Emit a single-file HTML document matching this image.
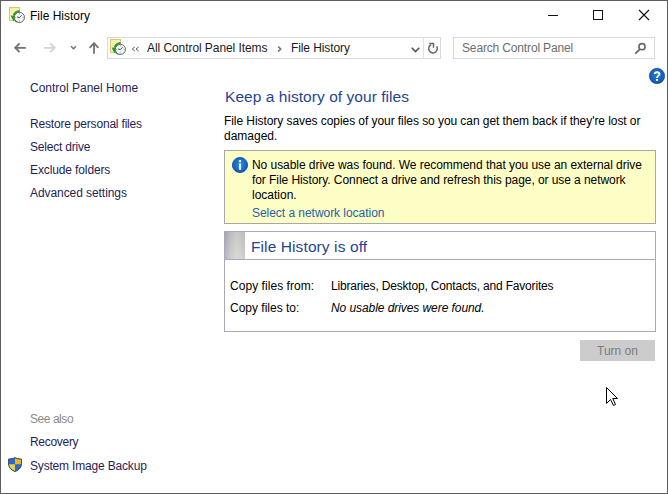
<!DOCTYPE html>
<html><head><meta charset="utf-8">
<style>
*{margin:0;padding:0;box-sizing:border-box}
html,body{width:668px;height:494px;overflow:hidden;background:#fff}
body{position:relative;font-family:"Liberation Sans",sans-serif;font-size:12px;color:#000}
.a{position:absolute;white-space:nowrap;line-height:15px}
#frame{position:absolute;left:0;top:0;width:668px;height:494px;border:1px solid #5e5e5e;pointer-events:none}
.nav{color:#1f2456}
.box{position:absolute;border:1px solid #a4a4a4}
svg{position:absolute;overflow:visible}
</style></head><body>

<!-- title bar -->
<svg style="left:9px;top:7px" width="17" height="17" viewBox="0 0 17 17">
  <defs><linearGradient id="yg1" x1="0" y1="0" x2="1" y2="1"><stop offset="0" stop-color="#fbeaa6"/><stop offset="0.5" stop-color="#fff3b0"/><stop offset="1" stop-color="#f3d77c"/></linearGradient></defs>
  <rect x="0.5" y="0.5" width="10" height="13" fill="url(#yg1)" stroke="#e2c27a"/>
  <path d="M10.6 4.6 A5.9 5.9 0 0 0 5.2 8.8" fill="none" stroke="#22a634" stroke-width="3.2"/>
  <path d="M1.6 8.4 L8.4 9 L4.4 14.2 Z" fill="#1e9e2e"/>
  <path d="M5.4 11.5 C5.6 13.5 6.8 14.6 8.4 15" fill="none" stroke="#2fb040" stroke-width="1.6"/>
  <circle cx="10.4" cy="10.4" r="5.1" fill="#f4f5f6" stroke="#5a5a5a" stroke-width="0.9"/>
  <path d="M8.2 9.9 L10.3 10.7 L12.6 8.3" fill="none" stroke="#333" stroke-width="0.9"/>
  <path d="M10.4 6.2 V7.2 M14.6 10.4 H13.6 M10.4 14.6 V13.6 M6.2 10.4 H7.2" stroke="#777" stroke-width="0.8"/>
</svg>
<div class="a" style="left:30px;top:9px;color:#000">File History</div>

<!-- window controls -->
<div style="position:absolute;left:548px;top:15px;width:10px;height:1px;background:#111"></div>
<div style="position:absolute;left:593px;top:10px;width:10px;height:10px;border:1px solid #111"></div>
<svg style="left:639px;top:10px" width="10" height="10" viewBox="0 0 10 10">
  <path d="M0 0 L10 10 M10 0 L0 10" stroke="#111" stroke-width="1.1"/>
</svg>

<!-- nav arrows -->
<svg style="left:13px;top:41px" width="14" height="14" viewBox="0 0 14 14">
  <path d="M2.2 6.8 H12.8 M6.6 2.4 L2.2 6.8 L6.6 11.2" fill="none" stroke="#737373" stroke-width="1.85"/>
</svg>
<svg style="left:42.7px;top:41px" width="14" height="14" viewBox="0 0 14 14">
  <path d="M0.8 6.8 H11.6 M7.2 2.4 L11.6 6.8 L7.2 11.2" fill="none" stroke="#d4d4d4" stroke-width="1.85"/>
</svg>
<svg style="left:70px;top:45px" width="7" height="5" viewBox="0 0 7 5">
  <path d="M1 1.2 L3.5 3.7 L6 1.2" fill="none" stroke="#707070" stroke-width="1.4"/>
</svg>
<svg style="left:88px;top:41px" width="12" height="14" viewBox="0 0 12 14">
  <path d="M6 2.2 V12.8 M1.6 6.8 L6 2.2 L10.4 6.8" fill="none" stroke="#737373" stroke-width="1.85"/>
</svg>

<!-- address bar -->
<div class="box" style="left:107px;top:37px;width:334px;height:22px;border-color:#d9d9d9"></div>
<div style="position:absolute;left:423px;top:38px;width:1px;height:20px;background:#e3e3e3"></div>
<svg style="left:110px;top:39px" width="17" height="17" viewBox="0 0 17 17">
  <defs><linearGradient id="yg2" x1="0" y1="0" x2="1" y2="1"><stop offset="0" stop-color="#fbeaa6"/><stop offset="0.5" stop-color="#fff3b0"/><stop offset="1" stop-color="#f3d77c"/></linearGradient></defs>
  <rect x="0.5" y="0.5" width="10" height="13" fill="url(#yg2)" stroke="#e2c27a"/>
  <path d="M10.6 4.6 A5.9 5.9 0 0 0 5.2 8.8" fill="none" stroke="#22a634" stroke-width="3.2"/>
  <path d="M1.6 8.4 L8.4 9 L4.4 14.2 Z" fill="#1e9e2e"/>
  <path d="M5.4 11.5 C5.6 13.5 6.8 14.6 8.4 15" fill="none" stroke="#2fb040" stroke-width="1.6"/>
  <circle cx="10.4" cy="10.4" r="5.1" fill="#f4f5f6" stroke="#5a5a5a" stroke-width="0.9"/>
  <path d="M8.2 9.9 L10.3 10.7 L12.6 8.3" fill="none" stroke="#333" stroke-width="0.9"/>
  <path d="M10.4 6.2 V7.2 M14.6 10.4 H13.6 M10.4 14.6 V13.6 M6.2 10.4 H7.2" stroke="#777" stroke-width="0.8"/>
</svg>
<svg style="left:131px;top:45.6px" width="9" height="6" viewBox="0 0 9 6">
  <path d="M3.8 1 L1.2 3 L3.8 5 M7.6 1 L5 3 L7.6 5" fill="none" stroke="#606060" stroke-width="1"/>
</svg>
<div class="a" style="left:147px;top:41px;color:#1a1a1a;letter-spacing:-0.07px">All Control Panel Items</div>
<svg style="left:277px;top:45.5px" width="5" height="7" viewBox="0 0 5 7">
  <path d="M1.1 0.6 L3.8 3.1 L1.1 5.6" fill="none" stroke="#787878" stroke-width="1.5"/>
</svg>
<div class="a" style="left:291px;top:41px;color:#1a1a1a;letter-spacing:-0.1px">File History</div>
<svg style="left:411px;top:46.5px" width="9" height="6" viewBox="0 0 9 6">
  <path d="M0.7 0.7 L4.5 4.6 L8.3 0.7" fill="none" stroke="#555" stroke-width="1.6"/>
</svg>
<svg style="left:427px;top:42px" width="12" height="13" viewBox="0 0 12 13">
  <path d="M9.6 4.26 A4.3 4.3 0 1 1 4.05 2.77" fill="none" stroke="#666" stroke-width="1.5"/>
  <path d="M2.2 1.6 H6.5 V5.8" fill="none" stroke="#666" stroke-width="1.5"/>
</svg>

<!-- search -->
<div class="box" style="left:453px;top:37px;width:202px;height:22px;border-color:#d9d9d9"></div>
<div class="a" style="left:462px;top:41px;color:#6d6d6d;letter-spacing:-0.15px">Search Control Panel</div>
<svg style="left:634px;top:42px" width="12" height="12" viewBox="0 0 12 12">
  <circle cx="8" cy="4.7" r="3.05" fill="none" stroke="#666" stroke-width="1.6"/>
  <path d="M5.9 7.1 L1.3 11.6" stroke="#666" stroke-width="1.8"/>
</svg>

<!-- help icon -->
<svg style="left:649px;top:68px" width="16" height="16" viewBox="0 0 16 16">
  <defs><radialGradient id="hg" cx="0.5" cy="0.45" r="0.55"><stop offset="0" stop-color="#2a7ad6"/><stop offset="0.75" stop-color="#1862b8"/><stop offset="1" stop-color="#0f4c94"/></radialGradient></defs>
  <circle cx="8" cy="8" r="7.7" fill="url(#hg)" stroke="#0e4a90" stroke-width="0.6"/>
  <path d="M5.7 6.1 C5.7 3.6 10.4 3.6 10.4 6.1 C10.4 7.8 8 8 8 9.9" fill="none" stroke="#fff" stroke-width="1.8"/>
  <rect x="7.05" y="11" width="1.9" height="1.9" fill="#fff"/>
</svg>

<!-- left nav -->
<div class="a nav" style="left:30px;top:81px">Control Panel Home</div>
<div class="a nav" style="left:30px;top:117px;letter-spacing:-0.19px">Restore personal files</div>
<div class="a nav" style="left:30px;top:140px;letter-spacing:-0.2px">Select drive</div>
<div class="a nav" style="left:30px;top:163px;letter-spacing:-0.12px">Exclude folders</div>
<div class="a nav" style="left:30px;top:186px;letter-spacing:-0.07px">Advanced settings</div>

<div class="a" style="left:30px;top:412px;color:#8a8a8a;letter-spacing:-0.45px">See also</div>
<div class="a nav" style="left:30px;top:435px;letter-spacing:-0.3px">Recovery</div>
<svg style="left:8px;top:457px" width="15" height="15" viewBox="0 0 15 15">
  <path d="M7 0.6 C9 1.6 11 2 13.4 2 L13.4 7 C13.4 10.6 11 13 7 14.5 C3 13 0.6 10.6 0.6 7 L0.6 2 C3 2 5 1.6 7 0.6 Z" fill="#2a6ad0" stroke="#3a3a3a" stroke-width="0.9"/>
  <path d="M7 1.2 C9 2.2 10.8 2.6 12.9 2.6 L12.9 7.3 L7 7.3 Z" fill="#f2b224"/>
  <path d="M7 7.3 L7 13.9 C3.6 12.6 1.2 10.5 1.1 7.3 Z" fill="#e4d24a"/>
</svg>
<div class="a nav" style="left:30px;top:459px;letter-spacing:-0.18px">System Image Backup</div>

<!-- main -->
<div class="a" style="left:225px;top:87px;font-size:15.5px;line-height:20px;color:#1f4592;letter-spacing:0.05px">Keep a history of your files</div>
<div class="a" style="left:224px;top:114px;color:#000;letter-spacing:-0.065px">File History saves copies of your files so you can get them back if they're lost or</div>
<div class="a" style="left:224px;top:129px;color:#000">damaged.</div>

<div class="box" style="left:224px;top:150px;width:432px;height:74px;background:#fdfdc6;border-color:#a8a8a8"></div>
<svg style="left:231px;top:156px" width="18" height="18" viewBox="0 0 18 18">
  <defs><radialGradient id="ig" cx="0.5" cy="0.45" r="0.55"><stop offset="0" stop-color="#2a86e6"/><stop offset="0.75" stop-color="#1768c4"/><stop offset="1" stop-color="#0d4f9c"/></radialGradient></defs>
  <circle cx="9" cy="9" r="8.6" fill="#ffffff" opacity="0.6"/>
  <circle cx="9" cy="9" r="7.6" fill="url(#ig)" stroke="#0b4a8e" stroke-width="0.8"/>
  <rect x="7.9" y="7.4" width="2.2" height="6.4" fill="#e4f6ff"/>
  <rect x="7.9" y="4" width="2.2" height="2.2" fill="#e4f6ff"/>
</svg>
<div class="a" style="left:252px;top:158px;letter-spacing:-0.05px">No usable drive was found. We recommend that you use an external drive</div>
<div class="a" style="left:252px;top:173px;letter-spacing:-0.07px">for File History. Connect a drive and refresh this page, or use a network</div>
<div class="a" style="left:252px;top:188px">location.</div>
<div class="a" style="left:252px;top:206px;color:#2562a4;letter-spacing:-0.04px">Select a network location</div>

<div class="box" style="left:224px;top:231px;width:432px;height:101px;border-color:#a9a9bd"></div>
<div style="position:absolute;left:225px;top:232px;width:20px;height:27px;background:linear-gradient(to bottom,rgba(90,90,110,0.10),rgba(255,255,255,0.12)),linear-gradient(to right,#aeaeb6 0%,#c6c6c6 25%,#d6d6cf 60%,#c6c6c6 100%)"></div>
<div style="position:absolute;left:225px;top:259px;width:430px;height:1px;background:#a9a9bd"></div>
<div class="a" style="left:251px;top:237px;font-size:15.5px;line-height:20px;color:#1f4592;letter-spacing:0.1px">File History is off</div>
<div class="a" style="left:230px;top:279px;letter-spacing:0.05px">Copy files from:</div>
<div class="a" style="left:331px;top:279px;letter-spacing:-0.18px">Libraries, Desktop, Contacts, and Favorites</div>
<div class="a" style="left:230px;top:301px;letter-spacing:0px">Copy files to:</div>
<div class="a" style="left:331px;top:301px;font-style:italic;letter-spacing:-0.07px">No usable drives were found.</div>

<div style="position:absolute;left:580px;top:340px;width:75px;height:21px;background:#cccccc"></div>
<div class="a" style="left:580px;top:344px;width:75px;text-align:center;color:#7c7c7c">Turn on</div>

<!-- cursor -->
<svg style="left:606px;top:387px" width="13" height="20" viewBox="0 0 13 20">
  <path d="M0.5 0.5 L0.5 16.5 L4.5 12.5 L7.5 18.5 L9.5 17.5 L6.8 11.5 L11.5 11.5 Z" fill="#fff" stroke="#000" stroke-width="1" stroke-linejoin="miter"/>
</svg>

<div id="frame"></div>
</body></html>
